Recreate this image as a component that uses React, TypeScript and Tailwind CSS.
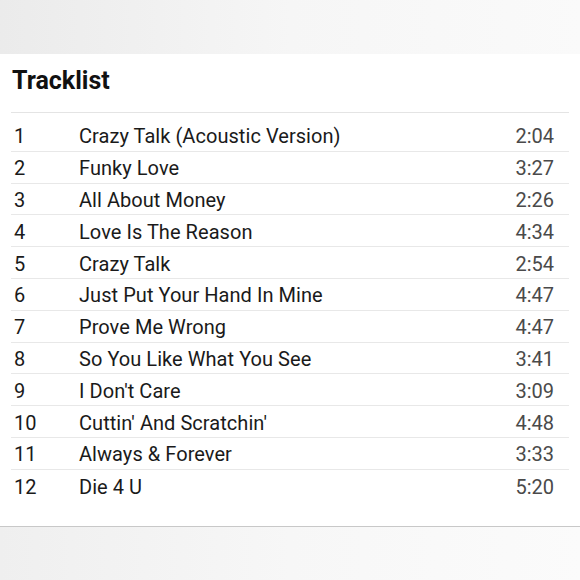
const TRACKS: { no: number; title: string; length: string }[] = [
  { no: 1, title: 'Crazy Talk (Acoustic Version)', length: '2:04' },
  { no: 2, title: 'Funky Love', length: '3:27' },
  { no: 3, title: 'All About Money', length: '2:26' },
  { no: 4, title: 'Love Is The Reason', length: '4:34' },
  { no: 5, title: 'Crazy Talk', length: '2:54' },
  { no: 6, title: 'Just Put Your Hand In Mine', length: '4:47' },
  { no: 7, title: 'Prove Me Wrong', length: '4:47' },
  { no: 8, title: 'So You Like What You See', length: '3:41' },
  { no: 9, title: "I Don't Care", length: '3:09' },
  { no: 10, title: "Cuttin' And Scratchin'", length: '4:48' },
  { no: 11, title: 'Always & Forever', length: '3:33' },
  { no: 12, title: 'Die 4 U', length: '5:20' },
];

export default function App() {
  return (
    <div className="w-[580px] h-[580px] flex flex-col bg-white font-['Roboto','Liberation_Sans',sans-serif] overflow-hidden">
      {/* top strip */}
      <div className="h-[54px] shrink-0 bg-gradient-to-r from-[#ebebeb] via-[#f6f6f6] to-[#fafafa]" />

      {/* Tracklist card */}
      <div className="bg-white border-b border-[#c8c8c8] px-[11px] pt-[13px] pb-[24px]">
        <h2 className="text-[25px] leading-[28px] font-bold text-[#111] pl-px pb-[17px] border-b border-[#e4e4e4]">
          Tracklist
        </h2>
        <div className="pt-[7px]">
          {TRACKS.map((t, i) => (
            <div
              key={t.no}
              className={`h-[31.8px] pt-[2px] flex items-center text-[20px] leading-none ${
                i < TRACKS.length - 1 ? 'border-b border-[#e8e8e8]' : ''
              }`}
            >
              <span className="w-[68px] pl-[3px] text-[#1a1a1a]">{t.no}</span>
              <span className="flex-1 text-[#1a1a1a] tracking-[0.05px]">{t.title}</span>
              <span className="pr-[15px] text-[#4a4a4a]">{t.length}</span>
            </div>
          ))}
        </div>
      </div>

      {/* bottom strip */}
      <div className="flex-1 bg-gradient-to-r from-[#efefef] via-[#f7f7f7] to-[#fbfbfb]" />
    </div>
  );
}
